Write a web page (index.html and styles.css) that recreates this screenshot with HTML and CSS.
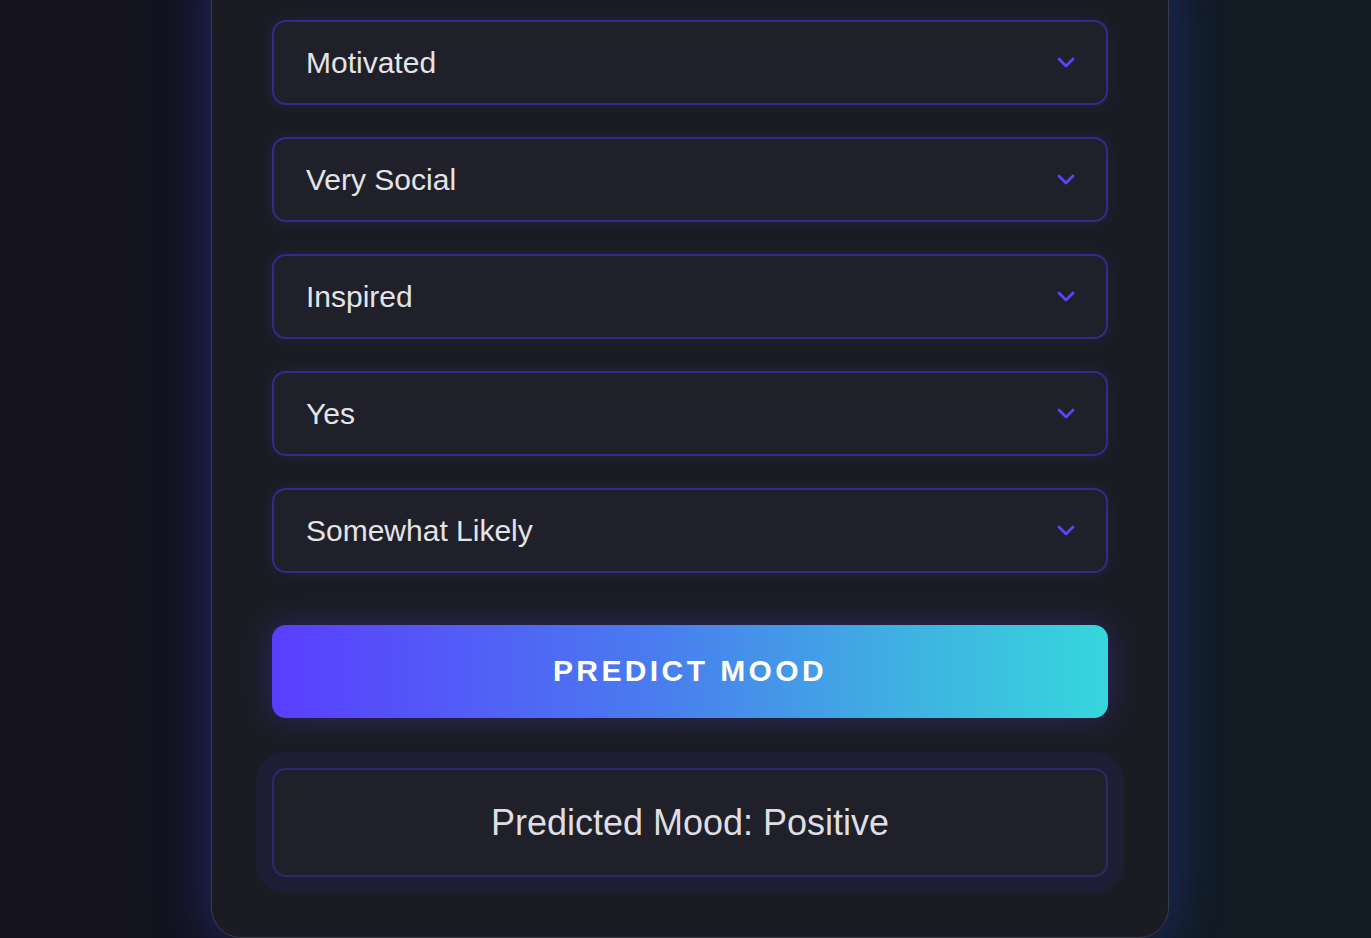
FILE: index.html
```html
<!DOCTYPE html>
<html lang="en">
<head>
<meta charset="utf-8">
<title>Mood Predictor</title>
<link rel="stylesheet" href="styles.css">
</head>
<body>
<div class="page">
  <main class="card">
    <form class="form">
      <div class="field">
        <select class="select"><option>Motivated</option></select>
        <svg class="chev" width="18" height="11" viewBox="0 0 18 11"><path d="M2 2 L9 9 L16 2" fill="none" stroke="#5a45ff" stroke-width="2.8" stroke-linecap="round" stroke-linejoin="round"/></svg>
      </div>
      <div class="field">
        <select class="select"><option>Very Social</option></select>
        <svg class="chev" width="18" height="11" viewBox="0 0 18 11"><path d="M2 2 L9 9 L16 2" fill="none" stroke="#5a45ff" stroke-width="2.8" stroke-linecap="round" stroke-linejoin="round"/></svg>
      </div>
      <div class="field">
        <select class="select"><option>Inspired</option></select>
        <svg class="chev" width="18" height="11" viewBox="0 0 18 11"><path d="M2 2 L9 9 L16 2" fill="none" stroke="#5a45ff" stroke-width="2.8" stroke-linecap="round" stroke-linejoin="round"/></svg>
      </div>
      <div class="field">
        <select class="select"><option>Yes</option></select>
        <svg class="chev" width="18" height="11" viewBox="0 0 18 11"><path d="M2 2 L9 9 L16 2" fill="none" stroke="#5a45ff" stroke-width="2.8" stroke-linecap="round" stroke-linejoin="round"/></svg>
      </div>
      <div class="field">
        <select class="select"><option>Somewhat Likely</option></select>
        <svg class="chev" width="18" height="11" viewBox="0 0 18 11"><path d="M2 2 L9 9 L16 2" fill="none" stroke="#5a45ff" stroke-width="2.8" stroke-linecap="round" stroke-linejoin="round"/></svg>
      </div>
      <button type="button" class="predict">PREDICT MOOD</button>
    </form>
    <div class="result-wrap">
      <div class="result">Predicted Mood: Positive</div>
    </div>
  </main>
</div>
</body>
</html>
```
FILE: styles.css
```css
html, body {
  margin: 0;
  padding: 0;
  height: 100%;
}
body {
  background: linear-gradient(90deg, #13121e 0%, #131522 40%, #121b25 75%, #111c24 100%);
  font-family: "Liberation Sans", Arial, sans-serif;
  overflow: hidden;
}
.page {
  display: flex;
  justify-content: center;
  padding-left: 9px;
}
.card {
  width: 836px;
  margin-top: -41px;
  padding: 60px 60px 44px;
  background: #1b1c23;
  border: 1px solid #3a3b44;
  border-radius: 30px;
  box-shadow: 0 0 46px 8px rgba(40, 56, 155, 0.45);
}
.form {
  display: flex;
  flex-direction: column;
  gap: 32px;
}
.field {
  position: relative;
}
.select {
  appearance: none;
  -webkit-appearance: none;
  display: block;
  width: 100%;
  height: 85px;
  box-sizing: border-box;
  padding: 0 32px;
  background: #1f2029;
  border: 2px solid #35298a;
  border-radius: 14px;
  color: #e4e4e8;
  font-family: "Liberation Sans", Arial, sans-serif;
  font-size: 30px;
  box-shadow: 0 0 12px rgba(80, 60, 230, 0.16);
  outline: none;
}
.chev {
  position: absolute;
  right: 33px;
  top: 37px;
  pointer-events: none;
}
.predict {
  margin-top: 20px;
  height: 93px;
  padding: 0 0 2px;
  border: none;
  border-radius: 14px;
  background: linear-gradient(90deg, #5a3eff 0%, #4a7bef 45%, #3fb0e2 75%, #36d6dd 100%);
  color: #ffffff;
  font-family: "Liberation Sans", Arial, sans-serif;
  font-weight: bold;
  font-size: 30px;
  letter-spacing: 3.4px;
  box-shadow: 0 0 32px rgba(85, 65, 255, 0.3);
  cursor: pointer;
}
.result-wrap {
  margin: 34px -16px 0;
  padding: 16px;
  background: #1e1d33;
  border-radius: 30px;
}
.result {
  height: 109px;
  box-sizing: border-box;
  display: flex;
  align-items: center;
  justify-content: center;
  background: #1f2029;
  border: 2px solid #30286a;
  border-radius: 14px;
  color: #dedee4;
  font-size: 36px;
}
```
